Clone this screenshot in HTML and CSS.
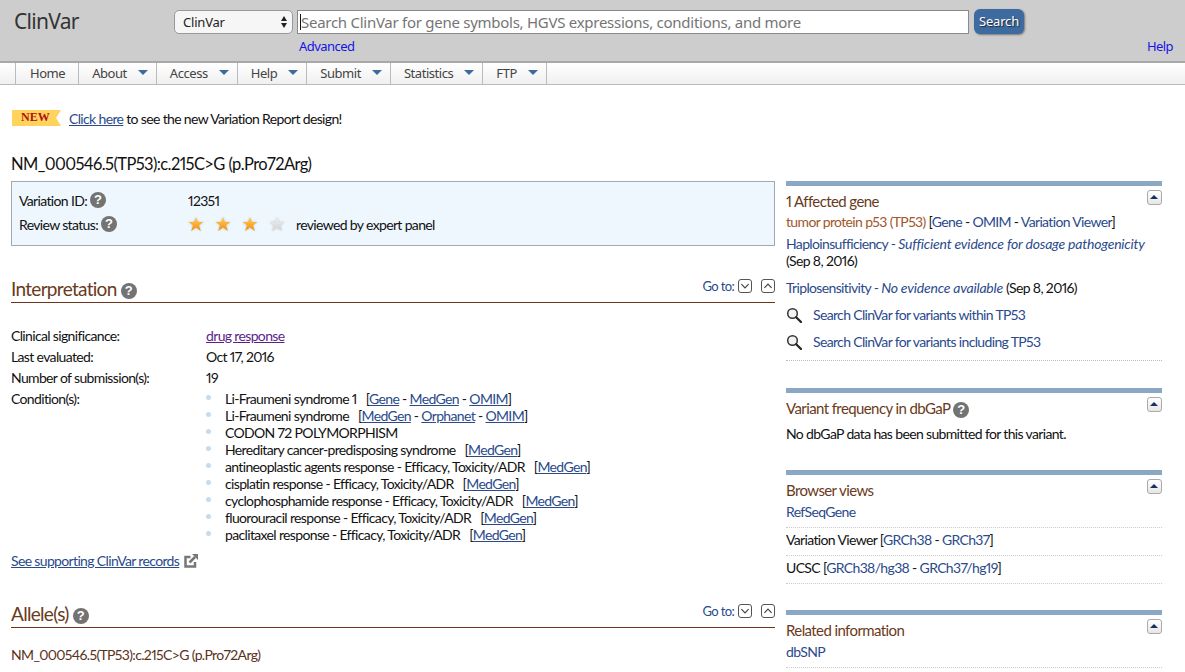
FILE: index.html
```html
<!DOCTYPE html>
<html lang="en">
<head>
  <meta charset="UTF-8">
  <title>NM_000546.5(TP53):c.215C&gt;G (p.Pro72Arg) - ClinVar</title>
  <link rel="stylesheet" href="styles.css">
</head>
<body>

<svg class="defs" width="0" height="0">
  <defs>
    <linearGradient id="gold" x1="0" y1="0" x2="0" y2="1">
      <stop offset="0" stop-color="#ffd15a"/>
      <stop offset="1" stop-color="#f78a0c"/>
    </linearGradient>
    <linearGradient id="silver" x1="0" y1="0" x2="0" y2="1">
      <stop offset="0" stop-color="#f0f0f0"/>
      <stop offset="1" stop-color="#d2d2d2"/>
    </linearGradient>
  </defs>
  <symbol id="star" viewBox="0 0 16 16">
    <path d="M8 1L10 6H15.500L11 9.300L12.800 15L8 11.500L3.200 15L5 9.300L.5 6H6Z"/>
  </symbol>
  <symbol id="lens" viewBox="0 0 16 16">
    <circle cx="6.500" cy="6.500" r="4.800" fill="#f2f2f2" stroke="#333" stroke-width="1.500"/>
    <path d="M10.200 10.200L15 15" stroke="#222" stroke-width="2.200" stroke-linecap="round"/>
  </symbol>
</svg>

<header class="masthead">
  <div class="brand">ClinVar</div>
  <div class="search-area">
    <div class="search-row">
      <div class="db-select">ClinVar<span class="updown"><i></i><i></i></span></div>
      <div class="search-box"><span class="caret"></span>Search ClinVar for gene symbols, HGVS expressions, conditions, and more</div>
      <div class="search-btn">Search</div>
    </div>
    <div class="link-row">
      <a href="#">Advanced</a>
      <a href="#">Help</a>
    </div>
  </div>
</header>

<nav class="menu">
  <a class="item" href="#">Home</a>
  <a class="item" href="#">About<i class="arrow"></i></a>
  <a class="item" href="#">Access<i class="arrow"></i></a>
  <a class="item" href="#">Help<i class="arrow"></i></a>
  <a class="item" href="#">Submit<i class="arrow"></i></a>
  <a class="item" href="#">Statistics<i class="arrow"></i></a>
  <a class="item" href="#">FTP<i class="arrow"></i></a>
</nav>

<div class="page">
  <div class="notice">
    <span class="new-flag">NEW</span>
    <span><a href="#">Click here</a> to see the new Variation Report design!</span>
  </div>

  <h1>NM_000546.5(TP53):c.215C&gt;G (p.Pro72Arg)</h1>

  <div class="columns">
    <main class="main">
      <div class="summary">
        <div class="summary-row">
          <div class="summary-label">Variation ID: <span class="help">?</span></div>
          <div>12351</div>
        </div>
        <div class="summary-row">
          <div class="summary-label">Review status: <span class="help">?</span></div>
          <div class="stars">
            <svg class="star" fill="url(#gold)"><use href="#star"/></svg>
            <svg class="star" fill="url(#gold)"><use href="#star"/></svg>
            <svg class="star" fill="url(#gold)"><use href="#star"/></svg>
            <svg class="star" fill="url(#silver)"><use href="#star"/></svg>
            <span class="stars-text">reviewed by expert panel</span>
          </div>
        </div>
      </div>

      <section class="sec sec-interp">
        <div class="sec-head">
          <h2>Interpretation <span class="help">?</span></h2>
          <div class="goto">Go to:
            <span class="gobtn"><svg viewBox="0 0 10 10"><path d="M2 3.500L5 6.500L8 3.500"/></svg></span>
            <span class="gobtn up"><svg viewBox="0 0 10 10"><path d="M2 6.500L5 3.500L8 6.500"/></svg></span>
          </div>
        </div>
        <dl class="facts">
          <dt>Clinical significance:</dt>
          <dd><a class="visited" href="#">drug response</a></dd>
          <dt>Last evaluated:</dt>
          <dd>Oct 17, 2016</dd>
          <dt>Number of submission(s):</dt>
          <dd>19</dd>
          <dt>Condition(s):</dt>
          <dd>
            <ul class="conditions">
              <li>Li-Fraumeni syndrome 1 <span class="refs">[<a href="#">Gene</a> - <a href="#">MedGen</a> - <a href="#">OMIM</a>]</span></li>
              <li>Li-Fraumeni syndrome <span class="refs">[<a href="#">MedGen</a> - <a href="#">Orphanet</a> - <a href="#">OMIM</a>]</span></li>
              <li>CODON 72 POLYMORPHISM</li>
              <li>Hereditary cancer-predisposing syndrome <span class="refs">[<a href="#">MedGen</a>]</span></li>
              <li>antineoplastic agents response - Efficacy, Toxicity/ADR <span class="refs">[<a href="#">MedGen</a>]</span></li>
              <li>cisplatin response - Efficacy, Toxicity/ADR <span class="refs">[<a href="#">MedGen</a>]</span></li>
              <li>cyclophosphamide response - Efficacy, Toxicity/ADR <span class="refs">[<a href="#">MedGen</a>]</span></li>
              <li>fluorouracil response - Efficacy, Toxicity/ADR <span class="refs">[<a href="#">MedGen</a>]</span></li>
              <li>paclitaxel response - Efficacy, Toxicity/ADR <span class="refs">[<a href="#">MedGen</a>]</span></li>
            </ul>
          </dd>
        </dl>
        <div class="supporting">
          <a href="#">See supporting ClinVar records</a>
          <svg class="ext" viewBox="0 0 14 14"><path d="M11 8V12.500H1.500V3H6.500" fill="none" stroke="#777" stroke-width="2.500"/><path d="M5.500 8.500L11 3" fill="none" stroke="#777" stroke-width="2.500"/><path d="M8 0H14V6Z" fill="#777"/></svg>
        </div>
      </section>

      <section class="sec sec-allele">
        <div class="sec-head">
          <h2>Allele(s) <span class="help">?</span></h2>
          <div class="goto">Go to:
            <span class="gobtn"><svg viewBox="0 0 10 10"><path d="M2 3.500L5 6.500L8 3.500"/></svg></span>
            <span class="gobtn up"><svg viewBox="0 0 10 10"><path d="M2 6.500L5 3.500L8 6.500"/></svg></span>
          </div>
        </div>
        <div class="allele-name">NM_000546.5(TP53):c.215C&gt;G (p.Pro72Arg)</div>
      </section>
    </main>

    <aside class="side">
      <section class="box box-gene">
        <h3>1 Affected gene</h3>
        <span class="toggle"></span>
        <p class="gene-line"><span class="brown">tumor protein p53 (TP53)</span> [<a href="#">Gene</a> - <a href="#">OMIM</a> - <a href="#">Variation Viewer</a>]</p>
        <p class="dose"><a href="#">Haploinsufficiency - <em>Sufficient evidence for dosage pathogenicity</em></a> <span class="date">(Sep 8, 2016)</span></p>
        <p class="dose"><a href="#">Triplosensitivity - <em>No evidence available</em></a> <span class="date">(Sep 8, 2016)</span></p>
        <p class="lens-line"><svg class="lens"><use href="#lens"/></svg><a href="#">Search ClinVar for variants within TP53</a></p>
        <p class="lens-line last"><svg class="lens"><use href="#lens"/></svg><a href="#">Search ClinVar for variants including TP53</a></p>
      </section>

      <section class="box box-freq">
        <h3>Variant frequency in dbGaP <span class="help">?</span></h3>
        <span class="toggle"></span>
        <p>No dbGaP data has been submitted for this variant.</p>
      </section>

      <section class="box box-browser">
        <h3>Browser views</h3>
        <span class="toggle"></span>
        <p class="row"><a href="#">RefSeqGene</a></p>
        <p class="row">Variation Viewer [<a href="#">GRCh38</a> - <a href="#">GRCh37</a>]</p>
        <p class="row">UCSC [<a href="#">GRCh38/hg38</a> - <a href="#">GRCh37/hg19</a>]</p>
      </section>

      <section class="box box-related">
        <h3>Related information</h3>
        <span class="toggle"></span>
        <p class="row"><a href="#">dbSNP</a></p>
      </section>
    </aside>
  </div>
</div>

</body>
</html>
```

FILE: styles.css
```css
html, body { height: 100%; overflow: hidden; }
body { margin: 0; background-color: #fff; color: #111; font-family: "Lato", "Noto Sans", sans-serif; font-size: 14px; line-height: 17px; letter-spacing: -0.65px; font-variant-numeric: proportional-nums; }
a { color: #2a4a8c; }
.defs { position: absolute; }
p { margin: 0; }

.masthead { height: 61px; background-color: #cdcdcd; border-bottom: 2px solid #a8a8a8; display: flex; font-family: "Noto Sans", sans-serif; letter-spacing: 0; }
.brand { width: 174px; padding: 7px 0 0 14px; box-sizing: border-box; font-size: 21px; line-height: 28px; color: #333; letter-spacing: -0.7px; }
.search-area { flex: 1; padding: 9px 12px 0 0; }
.search-row { display: flex; align-items: center; }
.db-select { width: 119px; height: 24px; box-sizing: border-box; margin-right: 4px; padding-left: 8px; background-color: #f6f6f6; border: 1px solid #999; border-radius: 5px; font-size: 13px; line-height: 22px; color: #222; letter-spacing: -0.2px; display: flex; justify-content: space-between; align-items: center; }
.updown { width: 8px; margin-right: 3px; display: flex; flex-direction: column; gap: 2px; }
.updown i { width: 0; height: 0; border-left: 3.500px solid transparent; border-right: 3.500px solid transparent; border-bottom: 5px solid #222; }
.updown i + i { border-bottom: 0; border-top: 5px solid #222; }
.search-box { width: 672px; height: 24px; box-sizing: border-box; padding-left: 2px; background-color: #fff; border: 1px solid #8a8a8a; font-size: 15px; line-height: 22px; color: #757575; letter-spacing: -0.27px; display: flex; align-items: center; white-space: nowrap; }
.caret { width: 1px; height: 16px; background-color: #111; flex: none; }
.search-btn { width: 50px; height: 25px; margin-left: 5px; background-color: #3d6a9f; border-radius: 6px; box-shadow: 1px 1px 2px #777; color: #fff; font-size: 13px; line-height: 25px; letter-spacing: -0.2px; text-align: center; text-shadow: 1px 1px 1px #223; }
.link-row { display: flex; justify-content: space-between; padding: 4px 0 0 125px; font-size: 13px; line-height: 16px; letter-spacing: -0.55px; }
.link-row a { color: #1414e6; text-decoration: none; }

.menu { height: 21px; padding-left: 15px; background: linear-gradient(#fff, #f0f0f0); border-bottom: 1px solid #bbb; display: flex; font-family: "Noto Sans", sans-serif; font-size: 13px; letter-spacing: -0.45px; }
.item { padding: 0 13px; border-left: 1px solid #bbb; color: #444; text-decoration: none; line-height: 21px; display: flex; align-items: center; }
.item:first-child { padding: 0 13px 0 14px; }
.item:last-child { border-right: 1px solid #bbb; }
.arrow { width: 0; height: 0; margin: 0 -5px 3px 11px; border-left: 5px solid transparent; border-right: 5px solid transparent; border-top: 5px solid #3d6a9f; }

.page { padding: 0 23px 0 11px; }
.notice { display: flex; align-items: center; margin-top: 24px; height: 18px; font-size: 14px; }
.new-flag { width: 49px; height: 16px; margin-left: 1px; margin-right: 8px; background-color: #ffd35c; clip-path: polygon(0 0, 100% 0, 90% 50%, 100% 100%, 0 100%); color: #b01212; font-family: "Liberation Serif", serif; font-weight: bold; font-size: 12px; line-height: 15px; padding-left: 9px; box-sizing: border-box; letter-spacing: 0; }
h1 { margin: 26px 0 6px; font-size: 16.500px; line-height: 22px; font-weight: normal; color: #111; letter-spacing: -0.6px; }

.columns { display: flex; justify-content: space-between; }
.main { width: 764px; }
.summary { height: 65px; box-sizing: border-box; padding: 6px 7px; background-color: #eef6fe; border: 1px solid #a3a9b1; }
.summary-row { display: flex; height: 24px; align-items: center; }
.summary-label { width: 169px; display: flex; align-items: center; gap: 3px; }
.help { width: 16px; height: 16px; border-radius: 50%; background-color: #737373; color: #fff; font-family: "Liberation Sans", sans-serif; font-size: 13px; font-weight: bold; line-height: 16px; letter-spacing: 0; text-align: center; display: inline-block; vertical-align: -2px; }
h2 .help { vertical-align: 1px; }
h3 .help { vertical-align: 0; }
.stars { display: flex; align-items: center; }
.star { width: 16px; height: 16px; margin-right: 11px; filter: drop-shadow(0 0 1px rgba(0, 0, 0, 0.2)); }
.stars-text { margin-top: 1px; }

.sec-head { display: flex; justify-content: space-between; border-bottom: 1px solid #6e3519; height: 27px; }
h2 { margin: 0; font-size: 19px; line-height: 27px; font-weight: normal; color: #6a3a20; letter-spacing: -0.7px; }
.goto { color: #2a4a8c; font-size: 13px; display: flex; align-items: center; height: 22px; }
.gobtn { width: 12px; height: 12px; margin-left: 4px; border: 1px solid #555; border-radius: 3px; display: block; }
.gobtn.up { margin-left: 9px; }
.gobtn svg { display: block; width: 12px; height: 12px; fill: none; stroke: #444; stroke-width: 1; }
.sec-interp { margin-top: 29px; }
.facts { margin: 24px 0 0; display: grid; grid-template-columns: 195px 1fr; row-gap: 4px; }
.facts dt { font-weight: normal; }
.facts dd { margin: 0; }
.visited { color: #5d1e8c; }
.conditions { margin: 0; padding: 0 0 0 19px; list-style: none; }
.conditions li { position: relative; }
.conditions li::before { content: ""; position: absolute; left: -19px; top: 5px; width: 5px; height: 5px; border-radius: 50%; background-color: #c4dcee; }
.refs { margin-left: 6px; }
.supporting { margin-top: 9px; display: flex; align-items: center; gap: 5px; }
.ext { width: 14px; height: 14px; }
.sec-allele { margin-top: 31px; }
.allele-name { margin-top: 18px; color: #5a3220; }

.side { width: 376px; }
.box { position: relative; border-top: 5px solid #8ba7c4; padding-top: 5px; }
.box h3 { margin: 0; font-size: 15px; line-height: 20px; font-weight: normal; color: #6a3a20; letter-spacing: -0.6px; }
.toggle { position: absolute; top: 4px; right: 0; width: 15px; height: 15px; border: 1px solid #aaa; border-radius: 3px; box-sizing: border-box; background: linear-gradient(#fff, #e6e6e6); }
.toggle::after { content: ""; position: absolute; left: 2px; top: 4px; border-left: 4.500px solid transparent; border-right: 4.500px solid transparent; border-bottom: 4px solid #14305c; }
.box a { text-decoration: none; }
.brown { color: #a2552b; }
.gene-line { margin-top: 2px; }
.dose { margin-top: 5px; }
.dose em { letter-spacing: -0.2px; }
.date { white-space: nowrap; }
.dose + .dose { margin-top: 10px; }
.lens-line { display: flex; align-items: center; margin-top: 10px; }
.lens { width: 16px; height: 16px; margin-right: 11px; }
.lens-line.last { padding-bottom: 10px; border-bottom: 1px dotted #bbb; }
.box-freq { margin-top: 27px; }
.box-freq p { margin-top: 7px; }
.box-browser { margin-top: 28px; }
.box-related { margin-top: 26px; }
.row { padding: 3px 0 7px; border-bottom: 1px dotted #ccc; }
```
